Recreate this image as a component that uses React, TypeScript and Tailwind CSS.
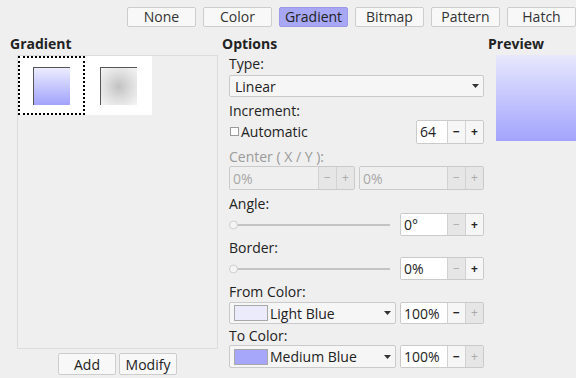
import React from "react";

const font = { fontFamily: '"Open Sans", "Noto Sans", sans-serif' };

function TabButton({ label, active }: { label: string; active?: boolean }) {
  return (
    <div
      className={
        "h-[20px] w-[69px] flex items-center justify-center rounded-[2px] border text-[14px] leading-none " +
        (active ? "bg-[#a7a7f6] border-[#9a9ae6] text-[#222]" : "bg-[#f8f8f8] border-[#cdcdcd] text-[#333]")
      }
    >
      {label}
    </div>
  );
}

function Spin({
  value,
  fieldW,
  disabled,
  minusDisabled,
  plusDisabled,
  h = "h-[24px]",
}: {
  value: string;
  fieldW: string;
  disabled?: boolean;
  minusDisabled?: boolean;
  plusDisabled?: boolean;
  h?: string;
}) {
  const md = disabled || minusDisabled;
  const pd = disabled || plusDisabled;
  return (
    <div className={"flex rounded-[2px] border border-[#cacaca] overflow-hidden " + h}>
      <div
        className={
          "flex items-center pl-[3px] text-[14px] " +
          fieldW +
          (disabled ? " bg-[#efefef] text-[#a8a8a8]" : " bg-white text-[#222]")
        }
      >
        {value}
      </div>
      <div
        className={
          "w-[18px] flex items-center justify-center border-l border-[#d2d2d2] text-[12px] " +
          (md ? "bg-[#e6e6e6] text-[#aaaaaa]" : "bg-[#f6f6f6] text-[#222] font-bold")
        }
      >
        −
      </div>
      <div
        className={
          "w-[18px] flex items-center justify-center border-l border-[#d2d2d2] text-[12px] " +
          (pd ? "bg-[#e6e6e6] text-[#aaaaaa]" : "bg-[#f6f6f6] text-[#222] font-bold")
        }
      >
        +
      </div>
    </div>
  );
}

function Slider() {
  return (
    <div className="relative flex-1 h-full flex items-center">
      <div className="h-[2px] w-full bg-[#c4c4c4] ml-[2px] mr-[6px]" />
      <div className="absolute left-[0px] top-1/2 -translate-y-1/2 w-[9px] h-[9px] rounded-full bg-[#f4f4f4] border border-[#cfcfcf]" />
    </div>
  );
}

function Caret() {
  return (
    <svg width="7" height="4" viewBox="0 0 7 4" className="mr-[4px]">
      <path d="M0 0 H7 L3.5 4 Z" fill="#333" />
    </svg>
  );
}

function ColorSelect({ swatch, label }: { swatch: string; label: string }) {
  return (
    <div className="w-[167px] h-full flex items-center rounded-[2px] border border-[#cacaca] bg-[#f6f6f6]">
      <div className={"ml-[4px] w-[34px] h-[16px] border border-[#a8a8a8] " + swatch} />
      <div className="ml-[2px] flex-1 text-[14px] text-[#222]">{label}</div>
      <Caret />
    </div>
  );
}

export default function App() {
  return (
    <div className="w-[576px] h-[378px] bg-[#efefef] overflow-hidden text-[#222]" style={font}>
      {/* top bar */}
      <div className="h-[30px] pt-[7px] flex justify-end gap-[7px]">
        <TabButton label="None" />
        <TabButton label="Color" />
        <TabButton label="Gradient" active />
        <TabButton label="Bitmap" />
        <TabButton label="Pattern" />
        <TabButton label="Hatch" />
      </div>

      <div className="flex pt-[5px]">
        {/* Gradient column */}
        <div className="w-[222px] pl-[10px] flex flex-col">
          <div className="h-[18px] leading-[18px] text-[14px] font-bold">Gradient</div>
          <div className="mt-[2px] ml-[7px] w-[201px] h-[294px] border border-[#dcdcdc] bg-[#efefef]">
            <div className="flex">
              <div className="w-[67px] h-[59px] bg-white border-2 border-dotted border-black flex items-center justify-center">
                <div className="w-[37px] h-[38px] border-l border-t border-[#555] bg-gradient-to-b from-[#ececfd] to-[#a2a2fb]" />
              </div>
              <div className="w-[67px] h-[59px] bg-white flex items-center justify-center">
                <div
                  className="w-[37px] h-[38px] border-l border-t border-[#555]"
                  style={{ background: "radial-gradient(circle at 50% 50%, #c2c2c2 0%, #dedede 50%, #f5f5f5 100%)" }}
                />
              </div>
            </div>
          </div>
          <div className="mt-[4px] ml-[7px] w-[201px] flex justify-center gap-[3px]">
            <div className="w-[58px] h-[22px] flex items-center justify-center rounded-[2px] border border-[#cdcdcd] bg-[#f8f8f8] text-[14px]">
              Add
            </div>
            <div className="w-[58px] h-[22px] flex items-center justify-center rounded-[2px] border border-[#cdcdcd] bg-[#f8f8f8] text-[14px]">
              Modify
            </div>
          </div>
        </div>

        {/* Options column */}
        <div className="w-[262px] flex flex-col">
          <div className="h-[18px] leading-[18px] text-[14px] font-bold">Options</div>
          <div className="pl-[7px] flex flex-col text-[14px]">
            <div className="h-[20px] flex items-center">Type:</div>
            <div className="mt-[2px] h-[22px] flex items-center justify-between rounded-[2px] border border-[#cacaca] bg-[#f6f6f6] pl-[5px]">
              <span>Linear</span>
              <Caret />
            </div>
            <div className="mt-[3px] h-[20px] flex items-center">Increment:</div>
            <div className="h-[23px] flex items-center justify-between">
              <div className="flex items-center">
                <div className="ml-[1px] w-[9px] h-[9px] border border-[#9a9a9a] bg-white" />
                <span className="ml-[2px]">Automatic</span>
              </div>
              <Spin value="64" fieldW="w-[30px]" h="h-[24px]" />
            </div>
            <div className="mt-[3px] h-[20px] flex items-center text-[#9a9a9a]">Center ( X / Y ):</div>
            <div className="h-[24px] flex justify-between">
              <Spin value="0%" fieldW="w-[88px]" disabled />
              <Spin value="0%" fieldW="w-[87px]" disabled />
            </div>
            <div className="mt-[3px] h-[20px] flex items-center">Angle:</div>
            <div className="h-[23px] flex items-center gap-[4px]">
              <Slider />
              <Spin value="0°" fieldW="w-[46px]" minusDisabled h="h-[23px]" />
            </div>
            <div className="mt-[1px] h-[20px] flex items-center">Border:</div>
            <div className="h-[23px] flex items-center gap-[4px]">
              <Slider />
              <Spin value="0%" fieldW="w-[46px]" minusDisabled h="h-[23px]" />
            </div>
            <div className="mt-[1px] h-[20px] flex items-center">From Color:</div>
            <div className="mt-[1px] h-[22px] flex items-center justify-between">
              <ColorSelect swatch="bg-[#ebebfc]" label="Light Blue" />
              <Spin value="100%" fieldW="w-[46px]" plusDisabled h="h-[22px]" />
            </div>
            <div className="mt-[1px] h-[20px] flex items-center">To Color:</div>
            <div className="h-[23px] flex items-center justify-between">
              <ColorSelect swatch="bg-[#a6a6fa]" label="Medium Blue" />
              <Spin value="100%" fieldW="w-[46px]" plusDisabled h="h-[23px]" />
            </div>
          </div>
        </div>

        {/* Preview column */}
        <div className="flex-1 pl-[4px] flex flex-col">
          <div className="h-[18px] leading-[18px] text-[14px] font-bold">Preview</div>
          <div className="mt-[2px] ml-[8px] h-[86px] bg-gradient-to-b from-[#e8e8fc] to-[#a3a3fc]" />
        </div>
      </div>
    </div>
  );
}
